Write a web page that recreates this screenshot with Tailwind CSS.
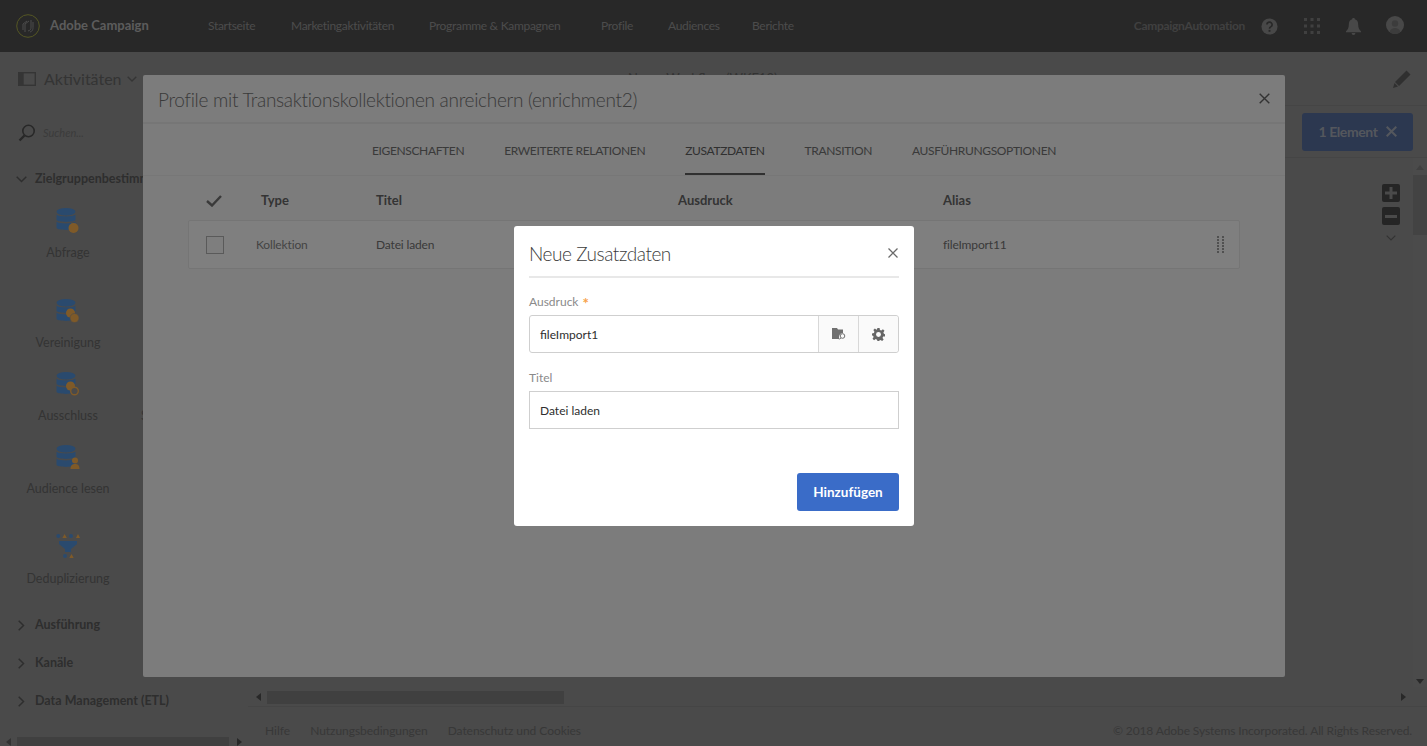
<!DOCTYPE html>
<html lang="de">
<head>
    <meta charset="UTF-8">
    <title>Adobe Campaign</title>
    <script src="https://cdn.jsdelivr.net/npm/@tailwindcss/browser@4"></script>
</head>
<body class="bg-[#949494] h-[746px] w-[1427px] overflow-hidden relative font-['Lato',sans-serif]">
    <!-- Top bar -->
    <header class="h-[52px] bg-[#505050] flex items-center">
        <svg class="ml-[16px] w-[24px] h-[24px]" viewBox="0 0 24 24" fill="none">
            <circle cx="12" cy="12" r="11.300" stroke="#a8ac48" stroke-width="1"/>
            <path d="M7 16V10l4-3M9 18v-8l4-3M12 17c3-1 3-2 3-4V6M14 18c3-1 3-3 3-5V8" stroke="#999" stroke-width="1"/>
        </svg>
        <span class="ml-[10px] w-[158px] text-[13px] font-bold text-[#b8b8b8]">Adobe Campaign</span>
        <nav class="flex text-[12px] tracking-[-0.3px] text-[#989898]">
            <a class="w-[83px]">Startseite</a>
            <a class="w-[138px]">Marketingaktivitäten</a>
            <a class="w-[172px]">Programme &amp; Kampagnen</a>
            <a class="w-[67px]">Profile</a>
            <a class="w-[84px]">Audiences</a>
            <a>Berichte</a>
        </nav>
        <div class="ml-auto flex items-center">
            <span class="text-[12px] tracking-[-0.3px] font-bold text-[#808080]">CampaignAutomation</span>
            <svg class="ml-[16px] w-[17px] h-[17px]" viewBox="0 0 18 18">
                <circle cx="9" cy="9" r="8.500" fill="#909090"/>
                <path d="M6.300 7a2.700 2.700 0 1 1 4 2.400c-.9.5-1.300 1-1.300 2" fill="none" stroke="#505050" stroke-width="1.800"/>
                <rect x="8" y="12.600" width="2" height="2" fill="#505050"/>
            </svg>
            <svg class="ml-[26px] w-[16px] h-[16px]" viewBox="0 0 16 16" fill="#808080">
                <rect width="3" height="3"/><rect x="6.500" width="3" height="3"/><rect x="13" width="3" height="3"/>
                <rect y="6.500" width="3" height="3"/><rect x="6.500" y="6.500" width="3" height="3"/><rect x="13" y="6.500" width="3" height="3"/>
                <rect y="13" width="3" height="3"/><rect x="6.500" y="13" width="3" height="3"/><rect x="13" y="13" width="3" height="3"/>
            </svg>
            <svg class="ml-[26px] w-[15px] h-[17px]" viewBox="0 0 16 18" fill="#909090">
                <path d="M8 0c1 0 1.400.6 1.400 1.300C12 2 13 4 13 7c0 3 1 5 3 7v1H0v-1c2-2 3-4 3-7 0-3 1-5 3.600-5.700C6.600.6 7 0 8 0zM6 16h4a2 2 0 0 1-4 0z"/>
            </svg>
            <svg class="ml-[25px] mr-[23px] w-[18px] h-[18px] mb-[3px]" viewBox="0 0 18 18">
                <circle cx="9" cy="9" r="9" fill="#909090"/>
                <circle cx="9" cy="7.500" r="3.200" fill="#787878"/>
                <path d="M3.500 16c1-3 3-4 5.500-4s4.500 1 5.500 4a9 9 0 0 1-11 0z" fill="#787878"/>
            </svg>
        </div>
    </header>

    <div class="flex h-[694px]">
        <!-- Activities sidebar -->
        <aside class="w-[248px] shrink-0 flex flex-col relative text-[#686868]">
            <div class="h-[54px] flex items-center pl-[18px]">
                <svg class="w-[18px] h-[14px]" viewBox="0 0 18 14" fill="none">
                    <rect x=".7" y=".7" width="16.600" height="12.600" stroke="#6a6a6a" stroke-width="1.400"/>
                    <rect x=".7" y=".7" width="5" height="12.600" fill="#6a6a6a"/>
                </svg>
                <span class="ml-[8px] text-[16px]">Aktivitäten</span>
                <svg class="ml-[5px] w-[10px] h-[6px]" viewBox="0 0 10 6" fill="none"><path d="M.7.7 5 5l4.300-4.300" stroke="#6a6a6a" stroke-width="1.400"/></svg>
            </div>
            <div class="h-[54px] flex items-center pl-[18px]">
                <svg class="w-[18px] h-[18px]" viewBox="0 0 18 18" fill="none">
                    <circle cx="10.500" cy="7" r="5.700" stroke="#505050" stroke-width="1.600"/>
                    <path d="M6.500 11.500 1.500 16.500" stroke="#505050" stroke-width="2.400"/>
                </svg>
                <span class="ml-[7px] text-[11px] italic text-[#777]">Suchen...</span>
            </div>
            <div class="mt-[3px] flex items-center pl-[16px] h-[32px] text-[12.500px] font-bold text-[#5c5c5c] whitespace-nowrap">
                <svg class="w-[11px] h-[7px] mr-[8px]" viewBox="0 0 11 7" fill="none"><path d="m.7.7 4.800 4.800L10.300.7" stroke="#5c5c5c" stroke-width="1.500"/></svg>
                Zielgruppenbestimmung
            </div>
            <div class="flex flex-col text-[12.500px] text-center w-[136px] mt-[13px]">
                <div class="h-[91px] flex flex-col items-center">
                    <svg class="w-[24px] h-[25px]" viewBox="0 0 24 25">
                        <ellipse cx="10" cy="3.800" rx="9.500" ry="3.800" fill="#5494dc"/>
                        <path d="M.5 6.500c2 2.500 17 2.500 19 0V12c-2 2.500-17 2.500-19 0zM.5 13.500c2 2.500 17 2.500 19 0V20c-2 2.500-17 2.500-19 0z" fill="#5494dc"/>
                        <circle cx="17.500" cy="20" r="5" fill="#ffb450"/>
                    </svg>
                    <span class="mt-[11px]">Abfrage</span>
                </div>
                <div class="h-[73px] flex flex-col items-center">
                    <svg class="w-[24px] h-[25px]" viewBox="0 0 24 25">
                        <ellipse cx="10" cy="3.800" rx="9.500" ry="3.800" fill="#5494dc"/>
                        <path d="M.5 6.500c2 2.500 17 2.500 19 0V12c-2 2.500-17 2.500-19 0zM.5 13.500c2 2.500 17 2.500 19 0V20c-2 2.500-17 2.500-19 0z" fill="#5494dc"/>
                        <circle cx="14.500" cy="14" r="4.500" fill="#ffb450"/><circle cx="18.500" cy="19" r="4.500" fill="#ffb450" stroke="#949494" stroke-width=".6"/>
                    </svg>
                    <span class="mt-[10px]">Vereinigung</span>
                </div>
                <div class="h-[73px] flex flex-col items-center relative">
                    <svg class="w-[24px] h-[25px]" viewBox="0 0 24 25">
                        <ellipse cx="10" cy="3.800" rx="9.500" ry="3.800" fill="#5494dc"/>
                        <path d="M.5 6.500c2 2.500 17 2.500 19 0V12c-2 2.500-17 2.500-19 0zM.5 13.500c2 2.500 17 2.500 19 0V20c-2 2.500-17 2.500-19 0z" fill="#5494dc"/>
                        <circle cx="14.500" cy="14" r="4.500" fill="#ffb450"/><circle cx="18.500" cy="19" r="3.800" fill="#949494" stroke="#ffb450" stroke-width="1.400"/>
                    </svg>
                    <span class="mt-[10px]">Ausschluss</span>
                    <span class="absolute left-[141px] top-[35px]">Segmentierung</span>
                </div>
                <div class="h-[89px] flex flex-col items-center">
                    <svg class="w-[24px] h-[25px]" viewBox="0 0 24 25">
                        <ellipse cx="10" cy="3.800" rx="9.500" ry="3.800" fill="#5494dc"/>
                        <path d="M.5 6.500c2 2.500 17 2.500 19 0V12c-2 2.500-17 2.500-19 0zM.5 13.500c2 2.500 17 2.500 19 0V20c-2 2.500-17 2.500-19 0z" fill="#5494dc"/>
                        <circle cx="19" cy="15.500" r="3" fill="#ffb450"/><path d="M14.500 24c0-4 2-5 4.500-5s4.500 1 4.500 5z" fill="#ffb450"/>
                    </svg>
                    <span class="mt-[10px]">Audience lesen</span>
                </div>
                <div class="h-[72px] flex flex-col items-center">
                    <svg class="w-[24px] h-[25px]" viewBox="0 0 24 25">
                        <circle cx="2.300" cy="2" r="2" fill="#5494dc"/><path d="m8.600 0 2.200 4H6.400z" fill="#ffb450"/>
                        <circle cx="15" cy="2" r="2" fill="#5494dc"/><path d="m22 0 2 4h-4z" fill="#ffb450"/>
                        <path d="M3 7h18v3l-6 5v3H9v-3l-6-5z" fill="#5494dc"/>
                        <circle cx="9" cy="22" r="2" fill="#5494dc"/><path d="m15.500 20 2.200 4h-4.400z" fill="#ffb450"/>
                    </svg>
                    <span class="mt-[11px]">Deduplizierung</span>
                </div>
            </div>
            <div class="flex flex-col text-[12.500px] font-bold text-[#5c5c5c] whitespace-nowrap">
                <div class="h-[38px] flex items-center pl-[18px]">
                    <svg class="w-[7px] h-[11px] mr-[10px]" viewBox="0 0 7 11" fill="none"><path d="m.7.7 4.800 4.800L.7 10.300" stroke="#5c5c5c" stroke-width="1.500"/></svg>Ausführung
                </div>
                <div class="h-[38px] flex items-center pl-[18px]">
                    <svg class="w-[7px] h-[11px] mr-[10px]" viewBox="0 0 7 11" fill="none"><path d="m.7.7 4.800 4.800L.7 10.300" stroke="#5c5c5c" stroke-width="1.500"/></svg>Kanäle
                </div>
                <div class="h-[38px] flex items-center pl-[18px]">
                    <svg class="w-[7px] h-[11px] mr-[10px]" viewBox="0 0 7 11" fill="none"><path d="m.7.7 4.800 4.800L.7 10.300" stroke="#5c5c5c" stroke-width="1.500"/></svg>Data Management (ETL)
                </div>
            </div>
            <!-- sidebar scrollbar -->
            <div class="absolute left-0 right-[6px] bottom-0 h-[9px] flex items-center">
                <span class="ml-[6px] border-y-[4px] border-r-[5px] border-y-transparent border-r-[#666]"></span>
                <span class="ml-[6px] w-[214px] h-[9px] bg-[#808080]"></span>
                <span class="ml-[8px] border-y-[4px] border-l-[5px] border-y-transparent border-l-[#505050]"></span>
            </div>
        </aside>

        <!-- Workflow area -->
        <main class="flex-1 flex flex-col relative min-w-0">
            <div class="h-[54px] flex items-center border-b border-[#8a8a8a] relative">
                <span class="ml-[380px] text-[13px] text-[#666]">Neuer Workflow (WKF12)</span>
                <svg class="ml-auto mr-[16px] w-[18px] h-[18px]" viewBox="0 0 18 18" fill="#606060">
                    <path d="M13.500.5 17.500 4.500 6 16 2 12zM1.500 13 5 16.500 0 18z"/>
                </svg>
            </div>
            <div class="h-[52px] flex items-center justify-end border-b border-[#8a8a8a] pr-[14px]">
                <button class="w-[111px] h-[38px] rounded-[3px] bg-[#5870a0] text-[14px] tracking-[-0.4px] font-bold text-[#a8aeba] flex items-center justify-center gap-[8px]">
                    1 Element
                    <svg class="w-[11px] h-[11px]" viewBox="0 0 11 11" fill="none"><path d="m.7.7 9.600 9.600m0-9.600L.7 10.300" stroke="#a8aeba" stroke-width="2"/></svg>
                </button>
            </div>
            <div class="flex-1 flex min-h-0 relative">
                <div class="flex-1"></div>
                <!-- zoom tools -->
                <div class="absolute right-[27px] top-[26px] flex flex-col items-center gap-[5px]">
                    <span class="w-[18px] h-[18px] rounded-[2px] bg-[#4a4a4a] flex items-center justify-center">
                        <svg class="w-[12px] h-[12px]" viewBox="0 0 12 12" fill="#949494"><path d="M4.500 0h3v4.500H12v3H7.500V12h-3V7.500H0v-3h4.500z"/></svg>
                    </span>
                    <span class="w-[18px] h-[18px] rounded-[2px] bg-[#4a4a4a] flex items-center justify-center">
                        <span class="w-[12px] h-[3px] bg-[#949494]"></span>
                    </span>
                    <svg class="w-[10px] h-[6px] mt-[5px]" viewBox="0 0 10 6" fill="none"><path d="M.7.7 5 5l4.300-4.300" stroke="#666" stroke-width="1.200"/></svg>
                </div>
                <!-- vertical scrollbar -->
                <div class="w-[14px] flex flex-col items-center bg-[#969696]">
                    <span class="mt-[7px] border-x-[4px] border-b-[5px] border-x-transparent border-b-[#808080]"></span>
                    <span class="mt-[5px] w-[14px] h-[60px] bg-[#878787]"></span>
                    <span class="mt-auto mb-[3px] border-x-[4px] border-t-[5px] border-x-transparent border-t-[#505050]"></span>
                </div>
            </div>
            <!-- horizontal scrollbar -->
            <div class="h-[20px] pt-[1px] flex items-center border-b border-[#8a8a8a]">
                <span class="ml-[8px] border-y-[4px] border-r-[5px] border-y-transparent border-r-[#505050]"></span>
                <span class="ml-[6px] w-[297px] h-[13px] bg-[#808080]"></span>
                <span class="ml-auto mr-[21px] border-y-[4px] border-l-[5px] border-y-transparent border-l-[#505050]"></span>
            </div>
            <footer class="h-[39px] pt-[9px] flex items-center pl-[17px] pr-[15px] text-[12px] text-[#707070]">
                <a class="mr-[20px]">Hilfe</a>
                <a class="mr-[20px] tracking-[-0.05px]">Nutzungsbedingungen</a>
                <a class="tracking-[-0.05px]">Datenschutz und Cookies</a>
                <span class="ml-auto tracking-[-0.1px]">© 2018 Adobe Systems Incorporated. All Rights Reserved.</span>
            </footer>
        </main>
    </div>

    <!-- Enrichment modal -->
    <section class="absolute left-[143px] top-[75px] w-[1142px] h-[602px] rounded-[2px] bg-[#f8f8f8] z-0 text-[#747474]">
        <div class="h-[49px] flex items-center justify-between pl-[15px] pr-[15px] border-b-2 border-[#ececec]">
            <h2 class="pt-[3px] text-[19px] tracking-[-0.3px] font-light text-[#747474]">Profile mit Transaktionskollektionen anreichern (enrichment2)</h2>
            <svg class="w-[11px] h-[11px]" viewBox="0 0 11 11" fill="none"><path d="m.7.7 9.600 9.600m0-9.600L.7 10.300" stroke="#666" stroke-width="1.400"/></svg>
        </div>
        <div class="h-[52px] flex justify-center border-b border-[#eeeeee] text-[12px] tracking-[-0.36px] uppercase gap-[40px]">
            <a class="pt-[18px]">Eigenschaften</a>
            <a class="pt-[18px]">Erweiterte Relationen</a>
            <a class="pt-[18px] border-b-2 border-[#606060] text-[#606060]">Zusatzdaten</a>
            <a class="pt-[18px]">Transition</a>
            <a class="pt-[18px]">Ausführungsoptionen</a>
        </div>
        <div class="px-[45px]">
            <div class="h-[44px] pt-[6px] flex items-center text-[13px] font-bold text-[#686868]">
                <svg class="ml-[18px] w-[16px] h-[12px]" viewBox="0 0 16 12" fill="none"><path d="m1 6 5 4.500L15 1" stroke="#747474" stroke-width="2.400"/></svg>
                <span class="ml-[39px] w-[115px]">Type</span>
                <span class="w-[302px]">Titel</span>
                <span class="w-[265px]">Ausdruck</span>
                <span>Alias</span>
            </div>
            <div class="h-[49px] flex items-center rounded-[2px] bg-white border border-[#eaeaea] text-[12px] tracking-[-0.15px]">
                <span class="ml-[17px] w-[18px] h-[18px] border border-[#b4b4b4] bg-[#fcfcfc]"></span>
                <span class="ml-[32px] w-[120px] text-[#888] pt-[1px]">Kollektion</span>
                <span class="w-[567px] pt-[1px]">Datei laden</span>
                <span class="pt-[1px]">fileImport11</span>
                <svg class="ml-auto mr-[15px] w-[7px] h-[18px]" viewBox="0 0 7 18" fill="#a0a0a0">
                    <rect width="2" height="2"/><rect x="5" width="2" height="2"/><rect y="3" width="2" height="2"/><rect x="5" y="3" width="2" height="2"/>
                    <rect y="6" width="2" height="2"/><rect x="5" y="6" width="2" height="2"/><rect y="9" width="2" height="2"/><rect x="5" y="9" width="2" height="2"/>
                    <rect y="12" width="2" height="2"/><rect x="5" y="12" width="2" height="2"/><rect y="15" width="2" height="2"/><rect x="5" y="15" width="2" height="2"/>
                </svg>
            </div>
        </div>
    </section>

    <!-- Overlay -->
    <div class="absolute inset-0 bg-black/50 z-10"></div>

    <!-- Neue Zusatzdaten dialog -->
    <section class="absolute left-[514px] top-[226px] w-[400px] h-[300px] rounded-[3px] bg-white z-20 px-[15px] flex flex-col">
        <div class="h-[52px] pt-[4px] flex items-center justify-between border-b-2 border-[#e8e8e8]">
            <h3 class="mt-[3px] text-[19px] tracking-[-0.45px] font-light text-[#3c3c3c]">Neue Zusatzdaten</h3>
            <svg class="mr-[1px] w-[10px] h-[10px]" viewBox="0 0 10 10" fill="none"><path d="m.5.500 9 9m0-9-9 9" stroke="#6a6a6a" stroke-width="1.300"/></svg>
        </div>
        <label class="mt-[15px] h-[22px] text-[12px] text-[#8a8a8a]">Ausdruck <span class="ml-[1px] text-[15px] leading-[12px] font-bold align-[-3px] text-[#f7a24a]">*</span></label>
        <div class="h-[38px] flex border border-[#cfcfcf] rounded-[3px]">
            <span class="flex-1 pl-[10px] pt-[1px] flex items-center text-[12px] text-[#2e2e2e]">fileImport1</span>
            <span class="w-[40px] flex items-center justify-center bg-[#fafafa] border-l border-[#d8d8d8]">
                <svg class="w-[14px] h-[12px]" viewBox="0 0 14 12">
                    <path d="M0 0h5l1 1.500h5V5a4 4 0 0 0-3.500 6H0z" fill="#707070"/>
                    <circle cx="10.500" cy="8" r="2.300" fill="none" stroke="#707070"/><path d="m8.800 10-1.500 1.500" stroke="#707070"/>
                </svg>
            </span>
            <span class="w-[40px] flex items-center justify-center bg-[#fafafa] border-l border-[#d8d8d8] rounded-r-[3px]">
                <svg class="w-[13px] h-[13px]" viewBox="0 0 24 24" fill="none">
                    <path d="M10 0h4l.7 3.500 2.500 1 3-2 2.800 2.800-2 3 1 2.500L24 11.500v4l-3.500.3-1 2.500 2 3-2.800 2.700-3-2-2.500 1L14 24h-4l-.7-2.500-2.500-1-3 2L1 19.800l2-3-1-2.500L0 14v-4l3.500-.7 1-2.500-2-3L5.300 1l3 2 1-.5z" fill="#666"/>
                    <circle cx="12" cy="12" r="4.500" fill="#fafafa"/>
                </svg>
            </span>
        </div>
        <label class="mt-[16px] h-[22px] text-[12px] text-[#8a8a8a]">Titel</label>
        <div class="h-[38px] flex items-center pl-[10px] pt-[1px] border border-[#cfcfcf] text-[12px] text-[#2e2e2e]">Datei laden</div>
        <div class="mt-[44px] flex justify-end">
            <button class="w-[102px] h-[38px] rounded-[3px] bg-[#3a6cc8] text-[13.500px] font-bold text-white">Hinzufügen</button>
        </div>
    </section>
</body>
</html>
